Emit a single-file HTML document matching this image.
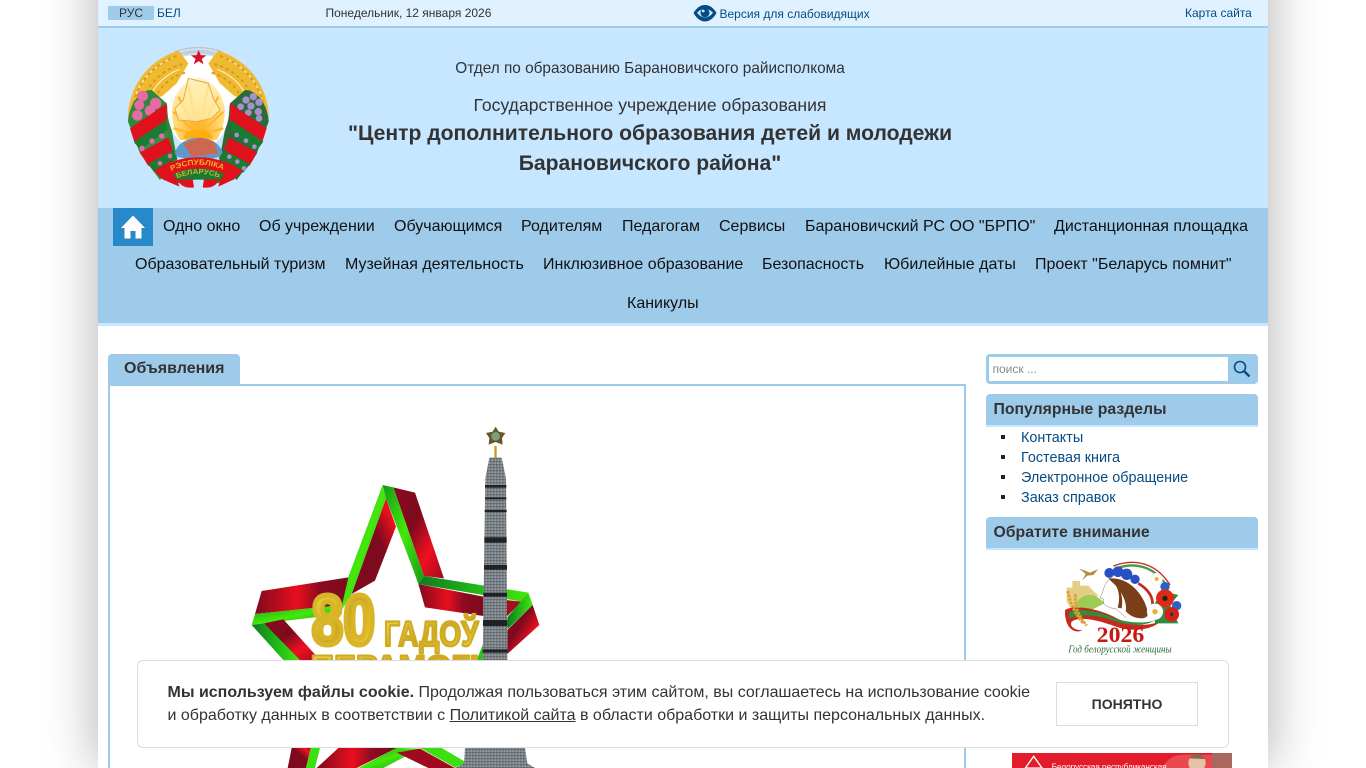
<!DOCTYPE html>
<html lang="ru"><head><meta charset="utf-8"><title>Центр дополнительного образования</title>
<style>
html,body{margin:0;padding:0;background:#fff;width:1366px;height:768px;overflow:hidden}
body{font-family:"Liberation Sans",sans-serif;color:#333;position:relative}
#w{position:absolute;left:98px;top:-60px;width:1170px;height:828px;background:#fff;box-shadow:0 0 50px rgba(0,0,0,.32)}
#clip{position:absolute;left:0;top:0;width:1366px;height:768px;overflow:hidden}
.a{position:absolute;white-space:nowrap}
a{color:#054c85;text-decoration:none}
.n{position:absolute;white-space:nowrap;font-size:16px;line-height:20px;color:#111}
.c{position:absolute;left:98px;width:1104px;text-align:center;white-space:nowrap}
.t{position:absolute;left:986px;width:272px;height:31px;background:#9ecbea;border-bottom:2px solid #c7e6ff;border-radius:4px 4px 0 0;font-weight:bold;font-size:15.800px;line-height:31px;box-sizing:content-box}
.t span{margin-left:7.500px}
.l{position:absolute;left:1021px;font-size:14.400px;line-height:20px;white-space:nowrap}
.b{position:absolute;left:1001px;width:4px;height:4px;background:#222}
svg{position:absolute;overflow:hidden}
</style></head><body>
<div id="clip">
<div id="w"></div>
<div class="a" style="left:98px;top:0;width:1170px;height:26px;background:#e0f1ff"></div>
<div class="a" style="left:98px;top:26px;width:1170px;height:2px;background:#9ecbea"></div>
<div class="a" style="left:98px;top:28px;width:1170px;height:180px;background:#c7e6ff"></div>
<div class="a" style="left:108px;top:6px;width:46px;height:14px;background:#9ecbea;text-align:center;font-size:12px;line-height:15px">РУС</div>
<a class="a" style="left:157px;top:6px;font-size:12px;line-height:15px">БЕЛ</a>
<div class="a" style="left:325.500px;top:6px;font-size:12px;line-height:15px">Понедельник, 12 января 2026</div>
<svg style="left:693px;top:2px" width="24" height="21" viewBox="0 0 24 21"><path d="M0.500 11C4 5 8 3 12 3s8 2 11.500 8C20 17 16 19.500 12 19.500S4 17 0.500 11Z" fill="#054c85"/><path d="M4 10.800C6.500 8 9 7 12 7s5.500 1 8 3.800C17.500 14 15 15.500 12 15.500S6.500 14 4 10.800Z" fill="#c7e6ff"/><circle cx="12" cy="10.800" r="4.500" fill="#054c85"/><circle cx="10.200" cy="9" r="1.400" fill="#c7e6ff"/></svg>
<a class="a" style="left:719.500px;top:7px;font-size:12px;line-height:15px">Версия для слабовидящих</a>
<a class="a" style="left:1185px;top:6px;font-size:12px;line-height:15px">Карта сайта</a>

<svg style="left:98px;top:0" width="300" height="250" viewBox="0 0 900 750">
<defs>
<radialGradient id="su" cx=".5" cy=".85" r=".85"><stop offset="0" stop-color="#ffa820"/><stop offset=".5" stop-color="#ffd970"/><stop offset="1" stop-color="#fff3cc"/></radialGradient>
<path id="ap1" d="M150 396Q235 352 322 396"/><path id="ap2" d="M168 416Q235 388 304 416"/>
</defs>
<g transform="translate(66 120)">
<path d="M30 250A205 205 0 0 1 440 250Z" fill="#fff"/>
<path d="M165 35A205 205 0 0 1 305 35M150 52A190 190 0 0 1 320 52M135 70A170 170 0 0 1 335 70" fill="none" stroke="#c4c4c4" stroke-width="4"/>
<path d="M176 32A211 211 0 0 0 24 245L45 215 60 170 125 170 170 130 205 70Z" fill="#efba30"/>
<path d="M294 32A211 211 0 0 1 446 245L425 215 410 170 345 170 300 130 265 70Z" fill="#efba30"/>
<path d="M155 55A195 195 0 0 0 45 170M178 88A160 160 0 0 0 92 165" fill="none" stroke="#fff" stroke-width="2.500"/>
<path d="M315 55A195 195 0 0 1 425 170M292 88A160 160 0 0 1 378 165" fill="none" stroke="#fff" stroke-width="2.500"/>
<path d="M170 48A200 200 0 0 0 38 200M188 72A175 175 0 0 0 72 170M195 98A140 140 0 0 0 110 165" fill="none" stroke="#d89c1c" stroke-width="6" stroke-dasharray="10 9"/>
<path d="M300 48A200 200 0 0 1 432 200M282 72A175 175 0 0 1 398 170M275 98A140 140 0 0 1 360 165" fill="none" stroke="#d89c1c" stroke-width="6" stroke-dasharray="10 9"/>
<path d="M24 245C28 190 60 150 95 150L140 190 172 360 120 420 60 340Z" fill="#2e8a3a"/>
<circle cx="68" cy="168" r="16" fill="#e56aa5"/><circle cx="107" cy="190" r="17" fill="#e56aa5"/><circle cx="58" cy="195" r="15" fill="#e56aa5"/><circle cx="90" cy="212" r="16" fill="#e56aa5"/><circle cx="52" cy="226" r="16" fill="#e56aa5"/>
<path d="M446 245C442 190 410 150 375 150L330 190 298 360 350 420 410 340Z" fill="#2b6a3a"/>
<g fill="#a890cc"><circle cx="378" cy="180" r="11"/><circle cx="400" cy="170" r="11"/><circle cx="417" cy="187" r="11"/><circle cx="393" cy="198" r="11"/><circle cx="362" cy="200" r="10"/><circle cx="415" cy="215" r="11"/><circle cx="385" cy="218" r="10"/><circle cx="417" cy="235" r="10"/></g>
<path d="M235 100C290 110 330 160 328 210C325 270 300 315 235 335C170 315 145 270 142 210C140 160 180 110 235 100Z" fill="#fff"/>
<path d="M235 112C282 122 318 170 314 225C310 265 300 285 290 300H180C170 285 160 265 156 225C152 170 188 122 235 112Z" fill="url(#su)"/>
<path d="M235 285L160 215M235 285L175 170M235 285L205 135M235 285L265 135M235 285L295 170M235 285L310 215M235 285L160 265M235 285L310 265" stroke="#ffb82e" stroke-width="7"/>
<path d="M205 115L265 130 280 175 300 210 275 235 230 245 175 240 165 205 190 180Z" fill="#ffefb0" fill-opacity=".75" stroke="#e8a94a" stroke-width="3"/>
<path d="M190 296A46 36 0 0 1 280 296Z" fill="#ffae10"/>
<path d="M163 348C170 275 302 275 310 348L235 365Z" fill="#5f9acb"/>
<path d="M190 310L240 293 280 303 295 340 215 350Z" fill="#cc6850"/>
<path d="M30 265L140 190V245L45 312Z" fill="#e0101c"/>
<path d="M42 305L140 240V272L60 330Z" fill="#1a7c30"/>
<path d="M60 330L142 272 146 290 62 340Z" fill="#3a8a4a"/>
<circle cx="96" cy="303" r="8" fill="#e56aa5"/><circle cx="125" cy="288" r="8" fill="#e56aa5"/><circle cx="66" cy="325" r="8" fill="#e56aa5"/>
<path d="M60 338L145 292 160 335 85 378Z" fill="#e0101c"/>
<path d="M84 372L160 330 172 355 104 398Z" fill="#1a7c30"/>
<circle cx="120" cy="370" r="7" fill="#e56aa5"/><circle cx="150" cy="348" r="7" fill="#e56aa5"/>
<path d="M102 392L155 362 178 440 128 418Z" fill="#e0101c"/>
<path d="M330 190L440 265 425 312 330 245Z" fill="#e0101c"/>
<path d="M332 240L430 305 410 332 332 272Z" fill="#1a7c30"/>
<circle cx="350" cy="285" r="7" fill="#a890cc"/><circle cx="378" cy="302" r="7" fill="#a890cc"/><circle cx="403" cy="320" r="7" fill="#a890cc"/>
<path d="M326 292L412 338 388 378 310 335Z" fill="#e0101c"/>
<path d="M312 330L390 372 370 398 296 355Z" fill="#1a7c30"/>
<circle cx="328" cy="350" r="7" fill="#a890cc"/><circle cx="352" cy="365" r="7" fill="#a890cc"/><circle cx="372" cy="385" r="7" fill="#a890cc"/>
<path d="M368 392L315 362 295 440 342 418Z" fill="#e0101c"/>
<path d="M148 372C185 345 285 345 322 372L306 404C270 386 205 386 164 404Z" fill="#e0101c"/>
<path d="M160 402C205 380 270 380 312 402L296 430C270 415 205 415 176 430Z" fill="#1a7c30"/>
<path d="M172 418H218L222 442C200 445 182 440 172 418ZM252 418H298C288 440 270 445 248 442Z" fill="#e0101c"/>
<text font-family="Liberation Sans" font-size="23" font-weight="bold" fill="#f2b51e"><textPath href="#ap1" startOffset="5" textLength="160" lengthAdjust="spacingAndGlyphs">РЭСПУБЛІКА</textPath></text>
<text font-family="Liberation Sans" font-size="22" font-weight="bold" fill="#c8b428"><textPath href="#ap2" startOffset="3" textLength="130" lengthAdjust="spacingAndGlyphs">БЕЛАРУСЬ</textPath></text>
<path d="M236 30l6 15.500 17 .5-13.500 10.500 5 16.500-14.500-9.500-14.500 9.500 5-16.500-13.500-10.500 17-.5Z" fill="#d9122a"/>
</g>
</svg>

<div class="c" style="top:60px;font-size:15.360px;line-height:18px">Отдел по образованию Барановичского райисполкома</div>
<div class="c" style="top:95px;font-size:17.600px;line-height:21px">Государственное учреждение образования</div>
<div class="c" style="top:121px;font-size:21.120px;line-height:26px;font-weight:bold">"Центр дополнительного образования детей и молодежи</div>
<div class="c" style="top:151px;font-size:21.120px;line-height:26px;font-weight:bold">Барановичского района"</div>

<div class="a" style="left:98px;top:208px;width:1170px;height:115px;background:#9ecbea"></div>
<div class="a" style="left:98px;top:323px;width:1170px;height:3px;background:#c7e6ff"></div>
<div class="a" style="left:113px;top:208px;width:40px;height:38px;background:#2789ca"></div>
<svg style="left:113px;top:208px" width="40" height="38" viewBox="0 0 40 38"><path d="M20 7.500L32 20h-3.500v10.500h-6V23h-5v7.500h-6V20H8Z" fill="#fff"/></svg>
<span class="n" style="left:163px;top:217px">Одно окно</span>
<span class="n" style="left:259px;top:217px">Об учреждении</span>
<span class="n" style="left:394px;top:217px">Обучающимся</span>
<span class="n" style="left:521px;top:217px">Родителям</span>
<span class="n" style="left:622px;top:217px">Педагогам</span>
<span class="n" style="left:719px;top:217px">Сервисы</span>
<span class="n" style="left:805px;top:217px">Барановичский РС ОО "БРПО"</span>
<span class="n" style="left:1054px;top:217px">Дистанционная площадка</span>
<span class="n" style="left:135px;top:255px">Образовательный туризм</span>
<span class="n" style="left:345px;top:255px">Музейная деятельность</span>
<span class="n" style="left:543px;top:255px">Инклюзивное образование</span>
<span class="n" style="left:762px;top:255px">Безопасность</span>
<span class="n" style="left:884px;top:255px">Юбилейные даты</span>
<span class="n" style="left:1035px;top:255px">Проект "Беларусь помнит"</span>
<span class="n" style="left:627px;top:294px">Каникулы</span>

<div class="a" style="left:108px;top:354px;width:132px;height:30px;background:#9ecbea;border-radius:4px 4px 0 0;font-weight:bold;font-size:16px;line-height:30px;text-indent:16px">Объявления</div>
<div class="a" style="left:108px;top:384px;width:854px;height:384px;border:2px solid #9ecbea;border-bottom:0"></div>

<svg style="left:220px;top:410px" width="340" height="358" viewBox="0 0 1020 1074">
<defs>
<linearGradient id="r1" x1="0" y1="0" x2="1" y2="0"><stop offset="0" stop-color="#7d0a1e"/><stop offset=".45" stop-color="#e80f1e"/><stop offset=".7" stop-color="#8c0a20"/><stop offset="1" stop-color="#7d0a1e"/></linearGradient>
<linearGradient id="r2" x1="0" y1="1" x2="1" y2="0"><stop offset="0" stop-color="#7d0a1e"/><stop offset=".6" stop-color="#7d0a1e"/><stop offset=".85" stop-color="#f01020"/><stop offset="1" stop-color="#a00a20"/></linearGradient>
<linearGradient id="r3" x1="0" y1="0" x2="1" y2="1"><stop offset="0" stop-color="#8c0a20"/><stop offset=".4" stop-color="#7d0a1e"/><stop offset=".7" stop-color="#f01020"/><stop offset="1" stop-color="#a00a20"/></linearGradient>
<linearGradient id="g1" x1="0" y1="0" x2="1" y2="1"><stop offset="0" stop-color="#139a18"/><stop offset=".5" stop-color="#45e80c"/><stop offset="1" stop-color="#159a18"/></linearGradient>
<linearGradient id="g2" x1="0" y1="0" x2="1" y2="0"><stop offset="0" stop-color="#0f7a20"/><stop offset=".5" stop-color="#1fb518"/><stop offset="1" stop-color="#45e80c"/></linearGradient>
<linearGradient id="au" x1="0" y1="0" x2="1" y2="1"><stop offset="0" stop-color="#f5dc50"/><stop offset=".5" stop-color="#cfa81c"/><stop offset="1" stop-color="#f2d23c"/></linearGradient>
<pattern id="st" width="9" height="9" patternUnits="userSpaceOnUse"><rect width="9" height="9" fill="#7d868c"/><rect x="1" y="1" width="3" height="3" fill="#3a4045"/><rect x="5" y="5" width="3" height="2" fill="#ccd0d3"/><rect x="5" y="1" width="2" height="2" fill="#4a5055"/></pattern>
</defs>
<polygon points="520,232 585,248 672,505 612,498" fill="url(#r3)"/>
<polygon points="498,265 528,350 465,512 395,552" fill="url(#r2)"/>
<polygon points="488,225 498,265 395,552 365,600 365,555" fill="url(#g1)"/>
<polygon points="488,225 520,232 612,498 595,522 580,480 498,265" fill="url(#g1)"/>
<polygon points="125,543 385,502 366,585 105,612" fill="url(#r1)"/>
<polygon points="95,645 105,612 366,585 366,612 132,640" fill="url(#g1)"/>
<polygon points="132,640 190,628 300,750 235,750" fill="url(#r3)"/>
<polygon points="95,645 132,640 240,750 190,750" fill="url(#g2)"/>
<polygon points="595,522 790,560 790,618 615,592" fill="url(#r1)"/>
<polygon points="595,522 612,498 925,548 905,575 790,555" fill="url(#g2)"/>
<polygon points="858,570 905,575 860,620" fill="#a80a1e"/>
<polygon points="925,548 938,585 862,658 862,622" fill="url(#g2)"/>
<polygon points="938,585 958,645 862,732 862,660" fill="url(#r3)"/>
<polygon points="770,750 790,700 790,750" fill="#2cc414"/>
<g font-family="Liberation Sans" font-weight="bold" stroke-linejoin="round">
<text x="275" y="704" font-size="212" fill="url(#au)" stroke="#d8b428" stroke-width="15" textLength="190" lengthAdjust="spacingAndGlyphs">80</text>
<text x="492" y="708" font-size="105" fill="url(#au)" stroke="#cfaa24" stroke-width="7" textLength="284" lengthAdjust="spacingAndGlyphs">ГАДОЎ</text>
<text x="272" y="800" font-size="92" fill="url(#au)" stroke="#cfaa24" stroke-width="6" textLength="505" lengthAdjust="spacingAndGlyphs">ПЕРАМОГІ</text>
</g>
<path d="M808 143H845L858 205L862 750H788L796 205Z" fill="url(#st)"/>
<g fill="#1f2327"><rect x="795" y="225" width="64" height="8"/><rect x="795" y="262" width="64" height="6"/><rect x="794" y="300" width="66" height="6"/><rect x="793" y="382" width="67" height="16"/><rect x="792" y="465" width="69" height="14"/><rect x="790" y="548" width="71" height="12"/><rect x="789" y="630" width="73" height="18"/><rect x="788" y="718" width="75" height="10"/></g>
<path d="M827 50l9 15 20 4-10 15 2 20-21-8-21 8 2-20-10-15 20-4Z" fill="#6a5526"/><circle cx="827" cy="79" r="13" fill="#7aa080"/><rect x="823" y="108" width="7" height="35" fill="#c99a20"/>
<polygon points="215,1014 272,1014 258,1074 203,1074" fill="url(#r2)"/>
<polygon points="272,1014 300,1014 285,1074 258,1074" fill="#3ce010"/>
<polygon points="355,1014 530,1014 410,1074 290,1074" fill="url(#r1)"/>
<polygon points="530,1014 600,1016 490,1074 415,1074" fill="url(#g1)"/>
<polygon points="530,1028 600,1016 705,1074 625,1074" fill="#a00a20"/>
<polygon points="600,1014 665,1014 740,1058 705,1072" fill="#3ce010"/>
<polygon points="735,1014 915,1014 922,1060 945,1074 705,1074 732,1060" fill="url(#st)"/>
</svg>

<div class="a" style="left:986px;top:354px;width:272px;height:30px;background:#9ecbea;border-radius:4px"></div>
<div class="a" style="left:989px;top:357px;width:239px;height:24px;background:#fff;font-size:12px;line-height:24px;color:#8a8a8a;text-indent:3.500px">поиск ...</div>
<svg style="left:1233px;top:360px" width="18" height="18" viewBox="0 0 18 18"><circle cx="7" cy="7" r="5.500" fill="none" stroke="#054c85" stroke-width="1.600"/><path d="M11 11L16.500 16.500" stroke="#054c85" stroke-width="2.400"/></svg>

<div class="t" style="top:394px"><span>Популярные разделы</span></div>
<i class="b" style="top:435px"></i><a class="l" style="top:427.500px">Контакты</a>
<i class="b" style="top:455px"></i><a class="l" style="top:447.500px">Гостевая книга</a>
<i class="b" style="top:475px"></i><a class="l" style="top:467.500px">Электронное обращение</a>
<i class="b" style="top:495px"></i><a class="l" style="top:487.500px">Заказ справок</a>
<div class="t" style="top:517px"><span>Обратите внимание</span></div>

<svg style="left:1055px;top:555px" width="135" height="105" viewBox="0 0 405 315">
<path d="M175 33C240 8 305 25 345 90" fill="none" stroke="#c8281e" stroke-width="4"/>
<path d="M185 40C240 20 295 35 330 85" fill="none" stroke="#4a9a4a" stroke-width="7"/>
<path d="M72 40L105 53 130 42 115 60 97 62 82 76 92 57Z" fill="#b88a3e"/>
<path d="M35 140V98H52V78H75V92H100L112 105 130 122 50 165Z" fill="#e6cd85"/>
<path d="M60 150C80 112 122 110 148 145L100 170Z" fill="#9ecb55"/>
<path d="M30 165C60 148 130 160 190 192C230 213 280 215 318 198C290 226 230 232 180 214C120 192 72 184 50 200C42 215 60 226 82 226C55 238 28 215 30 165Z" fill="#c8281e"/>
<path d="M42 172C85 158 130 170 180 190C225 205 270 205 300 197C265 215 220 212 175 197C130 180 80 175 42 190Z" fill="#2d8f3e"/>
<path d="M38 108C45 140 55 170 85 205M62 118C58 150 65 175 95 212" fill="none" stroke="#d9a232" stroke-width="9" stroke-dasharray="8 3"/>
<path d="M160 70C215 66 255 105 272 150C280 172 285 188 260 190C238 190 222 180 212 168C218 145 200 105 172 82Z" fill="#7a3f18"/>
<path d="M172 78C190 95 198 125 188 158L200 160C206 125 195 95 178 76Z" fill="#7a3f18"/>
<path d="M165 72C152 80 146 98 143 112L135 127 145 132 145 145C155 156 170 161 182 160L215 190" fill="none" stroke="#a07050" stroke-width="1.500"/>
<g fill="#2650c4"><circle cx="163" cy="54" r="15"/><circle cx="189" cy="50" r="16"/><circle cx="215" cy="58" r="17"/><circle cx="240" cy="73" r="14"/></g>
<path d="M250 85C290 110 300 140 288 172" fill="none" stroke="#c8281e" stroke-width="8"/>
<path d="M262 85C300 110 315 140 300 175" fill="none" stroke="#fff" stroke-width="3"/>
<path d="M295 150L325 110 370 120 345 150 370 205 300 205Z" fill="#2d8f3e"/>
<circle cx="305" cy="72" r="18" fill="#fff" stroke="#e4e4e4"/><circle cx="305" cy="72" r="6" fill="#e8b42a"/>
<circle cx="330" cy="95" r="14" fill="#2a62c8"/>
<circle cx="330" cy="130" r="27" fill="#e02a16"/><circle cx="330" cy="130" r="8" fill="#222"/>
<circle cx="365" cy="152" r="14" fill="#2a62c8"/>
<circle cx="300" cy="170" r="24" fill="#fff" stroke="#e4e4e4"/><circle cx="300" cy="170" r="8" fill="#e8b42a"/>
<circle cx="350" cy="178" r="22" fill="#d0241a"/><circle cx="350" cy="178" r="5" fill="#333"/>
<text x="125" y="261" font-family="Liberation Serif" font-size="66" font-weight="bold" fill="#c41a12" textLength="143" lengthAdjust="spacingAndGlyphs">2026</text>
<text x="40" y="292" font-family="Liberation Serif" font-style="italic" font-size="30" fill="#2a6a3a" textLength="310" lengthAdjust="spacingAndGlyphs">Год белорусской женщины</text>
</svg>

<svg style="left:1012px;top:753px" width="220" height="15" viewBox="0 0 660 45">
<rect width="660" height="45" fill="#e21c2a"/>
<path d="M450 45C470 12 490 5 520 5H600V45Z" fill="#e8484e"/>
<path d="M600 0H660V45H600Z" fill="#a86860"/>
<circle cx="555" cy="30" r="26" fill="#e8c0a8"/><path d="M533 16C545 -2 570 -2 578 18Z" fill="#8a6848"/>
<path d="M40 45L65 10 90 45Z" fill="none" stroke="#fff" stroke-width="4"/>
<text x="119" y="49" font-family="Liberation Sans" font-size="25" fill="#fff" textLength="345">Белорусская республиканская</text>
</svg>

<div class="a" style="left:137px;top:660px;width:1090px;height:86px;background:#fff;border:1px solid #ddd;border-radius:6px"></div>
<div class="a" style="left:167.500px;top:681px;font-size:16px;line-height:23px">
<b>Мы используем файлы cookie.</b> Продолжая пользоваться этим сайтом, вы соглашаетесь на использование cookie<br>
и обработку данных в соответствии с <span style="text-decoration:underline">Политикой сайта</span> в области обработки и защиты персональных данных.</div>
<div class="a" style="left:1056px;top:682px;width:140px;height:42px;border:1px solid #ddd;background:#fff;text-align:center;font-weight:bold;font-size:14px;line-height:42px">ПОНЯТНО</div>
</div>
</body></html>
